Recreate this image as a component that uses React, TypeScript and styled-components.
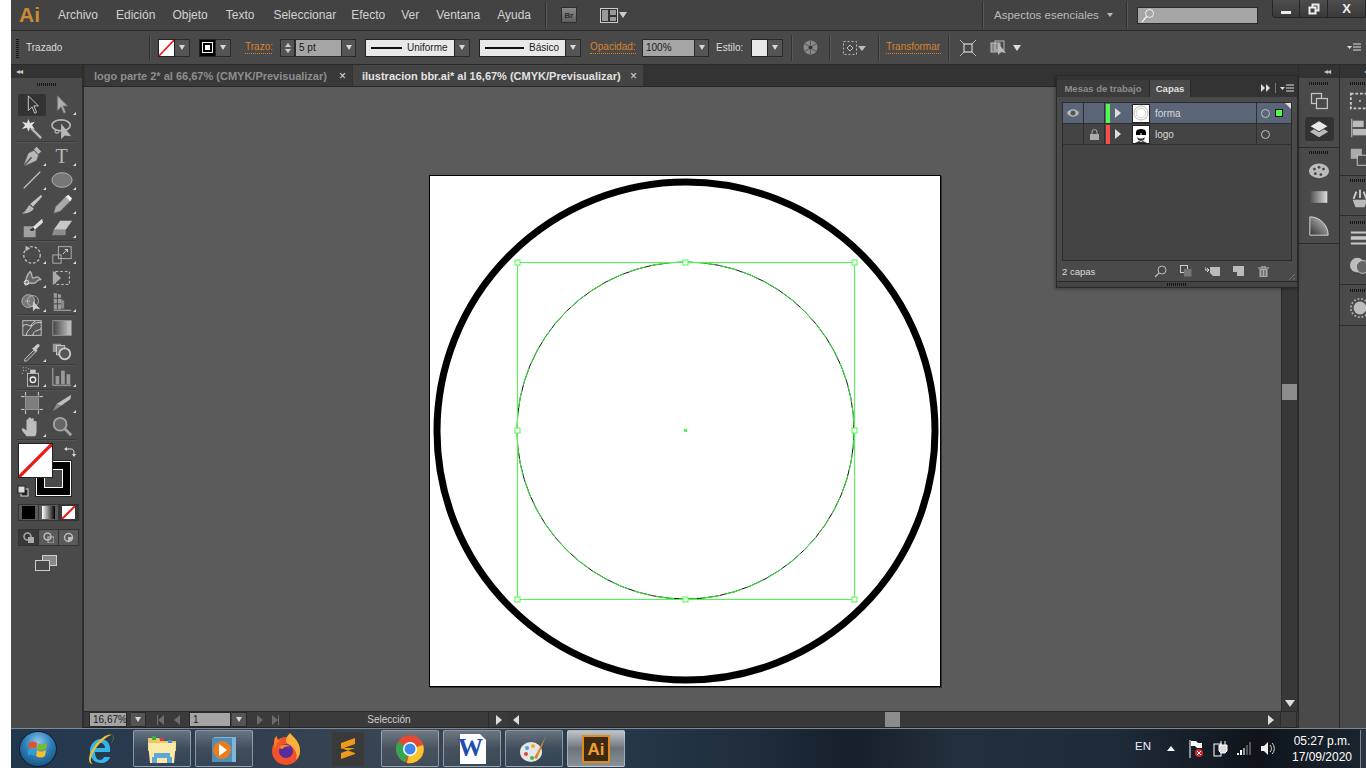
import React from "react";
import styled, { createGlobalStyle } from "styled-components";

const Global = createGlobalStyle`
  html, body { margin: 0; padding: 0; background: #fff; overflow: hidden; }
  * { box-sizing: border-box; }
  body { font-family: "Liberation Sans", Arial, sans-serif; }
`;

const Screen = styled.div`
  width: 1366px; height: 768px; padding-left: 11px; background: #fff;
  display: flex; flex-direction: column; overflow: hidden;
`;
const MenuBar = styled.div`
  height: 31px; flex: none; background: #434343; border-bottom: 1px solid #2a2a2a;
  display: flex; align-items: center; position: relative; color: #cfcfcf; font-size: 12px;
`;
const AiLogo = styled.span`
  margin-left: 8px; width: 22px; font-size: 21px; font-weight: 700; color: #c98a35; line-height: 30px;
`;
const MenuItem = styled.span<{ $ml: number }>`
  margin-left: ${(p) => p.$ml}px; white-space: nowrap; color: #d2d2d2;
`;
const VSep = styled.span<{ $ml: number; $h?: number; $c?: string }>`
  margin-left: ${(p) => p.$ml}px; width: 1px; height: ${(p) => p.$h ?? 26}px; background: ${(p) => p.$c ?? "#2f2f2f"};
  box-shadow: 1px 0 0 #585858; flex: none;
`;
const BrBadge = styled.span`
  margin-left: 15px; width: 16px; height: 16px; background: linear-gradient(#8a8a8a, #5e5e5e); border: 1px solid #2e2e2e;
  font-size: 8px; font-weight: 700; color: #2e2e2e; display: flex; align-items: center; justify-content: center; flex: none;
`;
const Slot = styled.span<{ $ml: number; $w: number; $h?: number }>`
  margin-left: ${(p) => p.$ml}px; width: ${(p) => p.$w}px; height: ${(p) => p.$h ?? 18}px; flex: none;
  display: flex; align-items: center; justify-content: center; position: relative;
`;
const WorkspaceLabel = styled.span`
  margin-left: 11px; width: 104px; color: #b9b9b9; font-size: 11.5px; white-space: nowrap; flex: none;
`;
const SearchBox = styled.span`
  margin-left: 10px; width: 121px; height: 17px; background: #a6a6a6; border: 1px solid #2b2b2b; display: flex; align-items: center; padding-left: 3px; flex: none;
`;
const WinButtons = styled.div`
  position: absolute; right: 0; top: 0; height: 18px; width: 94px; display: flex;
  background: linear-gradient(#4d4d4d, #3a3a3a); border: 1px solid #262626; border-top: 0; border-radius: 0 0 0 4px;
`;
const WinButton = styled.span<{ $w: number }>`
  width: ${(p) => p.$w}px; flex: none; display: flex; align-items: center; justify-content: center; border-right: 1px solid #262626; color: #eee; font-size: 13px; font-weight: 700;
  &:last-child { border-right: 0; }
`;

const OptionBar = styled.div`
  height: 34px; flex: none; background: #494949; border-bottom: 1px solid #2b2b2b;
  display: flex; align-items: center; font-size: 10px; color: #dcdcdc;
`;
const Grip = styled.span<{ $ml?: number; $w?: number; $h?: number; $v?: boolean }>`
  flex: none; margin-left: ${(p) => p.$ml ?? 0}px; width: ${(p) => p.$w ?? 20}px; height: ${(p) => p.$h ?? 3}px;
  background: repeating-linear-gradient(${(p) => (p.$v ? "0deg" : "90deg")}, #161616 0 1px, transparent 1px 2px);
`;
const Label = styled.span<{ $ml: number; $w: number; $orange?: boolean }>`
  flex: none; margin-left: ${(p) => p.$ml}px; width: ${(p) => p.$w}px; white-space: nowrap; line-height: 12px;
  color: ${(p) => (p.$orange ? "#d9822b" : "#dcdcdc")};
  border-bottom: ${(p) => (p.$orange ? "1px dotted #d9822b" : "0")};
`;
const Swatch = styled.span<{ $ml: number; $w?: number; $bg?: string }>`
  flex: none; margin-left: ${(p) => p.$ml}px; width: ${(p) => p.$w ?? 17}px; height: 18px;
  background: ${(p) => p.$bg ?? "#fff"}; border: 1px solid #222; display: flex; align-items: center; justify-content: center;
`;
const Drop = styled.span<{ $w?: number; $h?: number; $ml?: number }>`
  flex: none; margin-left: ${(p) => p.$ml ?? 0}px; width: ${(p) => p.$w ?? 15}px; height: ${(p) => p.$h ?? 18}px; background: #555; border: 1px solid #2a2a2a; border-left: 0;
  display: flex; align-items: center; justify-content: center;
  &::after { content: ""; border: 3.5px solid transparent; border-top: 5px solid #d8d8d8; border-bottom: 0; }
`;
const Spinner = styled.span<{ $ml: number }>`
  flex: none; margin-left: ${(p) => p.$ml}px; width: 15px; height: 18px; background: #555; border: 1px solid #2a2a2a;
  display: flex; flex-direction: column; align-items: center; justify-content: space-around; padding: 2px 0;
  &::before { content: ""; border: 3px solid transparent; border-bottom: 4px solid #cfcfcf; border-top: 0; }
  &::after { content: ""; border: 3px solid transparent; border-top: 4px solid #cfcfcf; border-bottom: 0; }
`;
const Field = styled.span<{ $ml?: number; $w: number; $h?: number }>`
  flex: none; margin-left: ${(p) => p.$ml ?? 0}px; width: ${(p) => p.$w}px; height: ${(p) => p.$h ?? 18}px;
  background: #a5a5a5; border: 1px solid #2a2a2a; color: #1a1a1a; font-size: 10px; display: flex; align-items: center; padding-left: 3px; white-space: nowrap;
`;
const StrokeBox = styled.span<{ $ml: number; $w: number; $line: number }>`
  flex: none; margin-left: ${(p) => p.$ml}px; width: ${(p) => p.$w}px; height: 18px; background: #e8e8e8; border: 1px solid #222;
  display: flex; align-items: center; color: #1e1e1e; font-size: 10px; padding-left: 5px; gap: 5px; white-space: nowrap;
  &::before { content: ""; width: ${(p) => p.$line}px; height: 2px; background: #111; flex: none; }
`;

const Body = styled.div`
  flex: 1; min-height: 0; display: flex;
`;
const ToolBar = styled.div`
  width: 73px; flex: none; background: #4a4a4a; border-right: 2px solid #2d2d2d; display: flex; flex-direction: column;
`;
const CollapseStrip = styled.div`
  height: 13px; flex: none; background: #333; display: flex; align-items: center; padding-left: 5px; color: #c8c8c8; font-size: 8px; letter-spacing: -1px;
`;
const GripRow = styled.div<{ $h?: number }>`
  height: ${(p) => p.$h ?? 12}px; flex: none; display: flex; align-items: center; justify-content: center;
`;
const ToolGroup = styled.div<{ $pt?: number }>`
  display: grid; grid-template-columns: 30px 30px; justify-content: center; flex: none;
  grid-auto-rows: 24px; padding: ${(p) => p.$pt ?? 1}px 0 0; border-bottom: 1px solid #3b3b3b; box-shadow: 0 1px 0 #555; margin: 0 6px;
`;
const Tool = styled.div<{ $active?: boolean; $more?: boolean }>`
  display: flex; align-items: center; justify-content: center; position: relative; border-radius: 2px;
  margin: ${(p) => (p.$active ? "1px" : "0")};
  background: ${(p) => (p.$active ? "#333" : "transparent")};
  font-family: "Liberation Serif", serif; font-size: 20px; color: #b8b8b8; line-height: 1;
  &::after {
    content: ""; position: absolute; right: 1px; bottom: 2px; display: ${(p) => (p.$more ? "block" : "none")};
    border-left: 3px solid transparent; border-bottom: 3px solid #ddd;
  }
`;
const ColorArea = styled.div`
  height: 56px; margin: 3px 0 0 6px; position: relative; flex: none;
`;
const FillBox = styled.div`
  position: absolute; left: 1px; top: 0; width: 35px; height: 35px; background: #fff; border: 1px solid #222; z-index: 2; overflow: hidden;
`;
const StrokeSquare = styled.div`
  position: absolute; left: 19px; top: 18px; width: 35px; height: 35px; background: #000; border: 1px solid #fff; outline: 1px solid #222; z-index: 1;
  display: flex; align-items: center; justify-content: center;
  &::after { content: ""; width: 17px; height: 17px; background: #4a4a4a; border: 1px solid #fff; }
`;
const MiniSwap = styled.span`
  position: absolute; left: 47px; top: 1px; z-index: 3;
`;
const MiniDefault = styled.span`
  position: absolute; left: 0; top: 40px; z-index: 3;
`;
const ButtonRow = styled.div<{ $mt: number }>`
  margin: ${(p) => p.$mt}px 0 0 7px; width: 61px; height: 17px; display: flex; flex: none; background: #383838; border: 1px solid #333;
`;
const ModeButton = styled.span<{ $active?: boolean }>`
  flex: 1; display: flex; align-items: center; justify-content: center; border-right: 1px solid #333;
  background: ${(p) => (p.$active ? "#383838" : "#5a5a5a")};
  &:last-child { border-right: 0; }
`;
const ScreenMode = styled.div`
  margin-top: 9px; display: flex; justify-content: center; padding-right: 1px;
`;

const Center = styled.div`
  flex: none; width: 1214px; display: flex; flex-direction: column; position: relative;
`;
const TabBar = styled.div`
  height: 22px; flex: none; background: #333; display: flex; border-bottom: 1px solid #262626;
`;
const Tab = styled.div<{ $active?: boolean; $w: number }>`
  width: ${(p) => p.$w}px; flex: none; margin-left: 1px; padding-left: 9px; display: flex; align-items: center; position: relative;
  background: ${(p) => (p.$active ? "#444" : "#393939")}; color: ${(p) => (p.$active ? "#e2e2e2" : "#8e8e8e")};
  font-size: 11px; font-weight: 700; white-space: nowrap;
`;
const TabClose = styled.span`
  position: absolute; right: 6px; top: 4px; font-size: 12px; font-weight: 400; color: #ddd;
`;
const CanvasRow = styled.div`
  flex: 1; min-height: 0; display: flex; border-bottom: 1px solid #2a2a2a;
`;
const Canvas = styled.div`
  flex: 1; background: #5b5b5b; padding: 88px 0 0 345px; min-width: 0;
`;
const Artboard = styled.div`
  width: 512px; height: 512px; background: #fff; border: 1px solid #000; box-shadow: 1px 1px 0 #333;
`;
const VScroll = styled.div`
  width: 17px; flex: none; background: #383838; border-left: 1px solid #2b2b2b; border-right: 1px solid #2b2b2b;
  display: flex; flex-direction: column; align-items: center;
`;
const VThumb = styled.div`
  width: 15px; height: 16px; background: #8c8c8c; margin-top: 297px; flex: none;
`;
const VArrow = styled.div`
  margin-top: auto; margin-bottom: 4px; border: 5px solid transparent; border-top: 7px solid #ddd; border-bottom: 0;
`;
const StatusBar = styled.div`
  height: 16px; flex: none; background: #3b3b3b; display: flex; align-items: center; border-bottom: 1px solid #262626; font-size: 10px; color: #d5d5d5;
`;
const StatusCell = styled.span`
  margin-left: 10px; width: 200px; height: 15px; flex: none; color: #d0d0d0; white-space: nowrap; text-align: center; line-height: 15px;
  border-left: 1px solid #2b2b2b; border-right: 1px solid #2b2b2b;
`;
const HScroll = styled.div`
  flex: none; margin-left: 6px; width: 772px; height: 15px; background: #383838; display: flex; align-items: center; position: relative;
`;
const HThumb = styled.span`
  position: absolute; left: 377px; top: 0; width: 15px; height: 15px; background: #8c8c8c;
`;
const Corner = styled.span`
  width: 17px; height: 15px; flex: none; background: #3f3f3f; border-left: 1px solid #2b2b2b; border-right: 1px solid #2b2b2b;
`;
const Tri = styled.span<{ $dir: "l" | "r"; $ml?: number; $c?: string }>`
  flex: none; margin-left: ${(p) => p.$ml ?? 0}px; width: 0; height: 0; border-top: 5px solid transparent; border-bottom: 5px solid transparent;
  ${(p) => (p.$dir === "l" ? `border-right: 6px solid ${p.$c ?? "#ddd"};` : `border-left: 6px solid ${p.$c ?? "#ddd"};`)}
`;
const Bar = styled.span<{ $ml?: number; $c?: string }>`
  flex: none; margin-left: ${(p) => p.$ml ?? 0}px; width: 1px; height: 10px; background: ${(p) => p.$c ?? "#6c6c6c"};
`;

const Panel = styled.div`
  position: absolute; left: 972px; top: 10px; width: 242px; height: 213px; background: #4a4a4a;
  border: 1px solid #2a2a2a; display: flex; flex-direction: column; box-shadow: -1px 1px 3px rgba(0,0,0,.35); z-index: 5;
`;
const PanelHead = styled.div`
  height: 21px; flex: none; background: #333; display: flex; align-items: flex-end; position: relative; font-size: 9.5px; font-weight: 700;
`;
const PanelTab = styled.span<{ $active?: boolean; $w: number }>`
  width: ${(p) => p.$w}px; height: 17px; display: flex; align-items: center; justify-content: center; flex: none; white-space: nowrap;
  background: ${(p) => (p.$active ? "#4a4a4a" : "#3b3b3b")}; color: ${(p) => (p.$active ? "#e0e0e0" : "#8d8d8d")}; border-right: 1px solid #2a2a2a;
`;
const PanelHeadIcons = styled.span`
  position: absolute; right: 3px; top: 7px; display: flex; align-items: center; gap: 4px;
`;
const LayerList = styled.div`
  margin: 5px 5px 0; height: 159px; flex: none; background: #444; border: 1px solid #2b2b2b; display: flex; flex-direction: column;
`;
const LayerRow = styled.div<{ $sel?: boolean }>`
  height: 21px; flex: none; display: flex; align-items: center; position: relative; border-bottom: 1px solid #2f2f2f;
  background: ${(p) => (p.$sel ? "#5a6577" : "transparent")};
  &::after {
    content: ""; position: absolute; right: 0; top: 0; display: ${(p) => (p.$sel ? "block" : "none")};
    border-left: 6px solid transparent; border-top: 6px solid #ddd;
  }
`;
const LayerCell = styled.span<{ $w: number }>`
  width: ${(p) => p.$w}px; height: 100%; flex: none; display: flex; align-items: center; justify-content: center; border-right: 1px solid #2f2f2f;
`;
const ColorTag = styled.span<{ $c: string }>`
  width: 4px; height: 19px; margin-left: 1px; background: ${(p) => p.$c}; flex: none;
`;
const Thumb = styled.span`
  margin-left: 10px; width: 18px; height: 19px; background: #fff; border: 1px solid #222; display: flex; align-items: center; justify-content: center; flex: none;
`;
const LayerName = styled.span`
  margin-left: 5px; width: 102px; height: 100%; flex: none; font-size: 10px; color: #d8d8d8; display: flex; align-items: center; border-right: 1px solid #2f2f2f;
`;
const TargetRing = styled.span`
  margin-left: 4px; width: 9px; height: 9px; border-radius: 50%; border: 1px solid #c0c0c0; flex: none;
`;
const SelSquare = styled.span`
  margin-left: 6px; width: 6px; height: 6px; background: #4dfc4d; outline: 1px solid #111; flex: none;
`;
const PanelFooter = styled.div`
  height: 20px; flex: none; display: flex; align-items: center; padding-left: 5px; font-size: 9.5px; color: #dcdcdc; position: relative;
`;
const FooterText = styled.span`
  width: 92px; flex: none;
`;
const ResizeGrip = styled.span`
  position: absolute; right: 2px; bottom: 1px; width: 9px; height: 9px;
  background: repeating-linear-gradient(135deg, transparent 0 2px, #777 2px 3px);
  clip-path: polygon(100% 0, 100% 100%, 0 100%);
`;
const PanelBottom = styled.div`
  flex: 1; background: #434343; border-top: 1px solid #2a2a2a; display: flex; align-items: center; justify-content: center;
`;

const Docks = styled.div`
  flex: 1; min-width: 0; display: flex; background: #4a4a4a; overflow: hidden;
`;
const DockCol = styled.div`
  width: 41px; flex: none; display: flex; flex-direction: column; border-left: 1px solid #2a2a2a;
`;
const DockHead = styled.div<{ $pl: number }>`
  height: 13px; flex: none; background: #333; color: #c8c8c8; font-size: 8px; letter-spacing: -1px; display: flex; align-items: center; padding-left: ${(p) => p.$pl}px;
`;
const DockGroup = styled.div<{ $h: number }>`
  height: ${(p) => p.$h}px; flex: none; border-bottom: 1px solid #2d2d2d; display: flex; flex-direction: column; align-items: center;
`;
const DockIcon = styled.span<{ $h?: number; $active?: boolean; $mt?: number }>`
  height: ${(p) => p.$h ?? 28}px; width: 29px; flex: none; display: flex; align-items: center; justify-content: center; border-radius: 3px;
  margin-top: ${(p) => p.$mt ?? 0}px;
  background: ${(p) => (p.$active ? "#333" : "transparent")};
`;

const Taskbar = styled.div`
  height: 40px; flex: none; display: flex; align-items: center; border-top: 1px solid #7a8a99; color: #fff; font-size: 12px;
  background: linear-gradient(90deg, #22364c 0, #2f3e50 15%, #3a4652 30%, #26384a 45%, #1f2c3b 55%, #16202b 62%, #232f3c 70%, #1e2a38 82%, #0f141a 92%, #1a2530 100%);
`;
const Orb = styled.span`
  margin-left: 8px; width: 38px; height: 36px; border-radius: 50%; flex: none; position: relative; display: flex; align-items: center; justify-content: center;
  background: radial-gradient(circle at 50% 30%, #8ec6ea 0, #2d7fb8 45%, #123f69 100%); border: 1px solid #0d2338;
`;
const TaskTile = styled.span<{ $ml: number; $active?: boolean }>`
  margin-left: ${(p) => p.$ml}px; width: 58px; height: 37px; flex: none; display: flex; align-items: center; justify-content: center; border-radius: 2px;
  background: ${(p) => p.$active ? "linear-gradient(#bfc4c9, #6d737a 50%, #8a9097)" : "linear-gradient(rgba(255,255,255,.28), rgba(255,255,255,.08) 50%, rgba(255,255,255,.04))"};
  border: 1px solid rgba(200,210,220,.55);
`;
const TrayText = styled.span<{ $ml: number }>`
  margin-left: ${(p) => p.$ml}px; margin-bottom: 6px; font-size: 11.5px; flex: none; color: #eef;
`;
const Clock = styled.span`
  margin-left: 15px; width: 64px; flex: none; text-align: center; font-size: 12px; line-height: 16px; color: #fff; white-space: nowrap;
`;
const ShowDesktop = styled.span`
  margin-left: 6px; width: 7px; height: 38px; flex: none; border-left: 1px solid #7a8a99; background: rgba(255,255,255,.08);
`;

const C = "#b8b8b8";
const I = ({ children, s = 22, v = 24 }: { children: React.ReactNode; s?: number; v?: number }) => (
  <svg width={s} height={s} viewBox={`0 0 ${v} ${v}`} fill="none">{children}</svg>
);

const tools: Record<string, React.ReactNode> = {
  select: <path d="M8 2v16l4-4 3 7 2-1-3-7h5z" fill="#333" stroke="#d0d0d0" />,
  direct: <path d="M7 2v16l4-4 3 7 2-1-3-7h5z" fill="#b0b0b0" stroke="#777" />,
  wand: <><path d="M11 11l11 11" stroke={C} strokeWidth="2.500" /><path d="M8 1l1.8 4.500L15 4l-3 4 3 4-5.200-1.500L8 15l-1.500-4.500L1 12l3.500-4L1 4l5.500 1.500z" fill="#e2e2e2" /></>,
  lasso: <><ellipse cx="11" cy="8" rx="10" ry="6" stroke={C} strokeWidth="1.800" /><path d="M5 13c-2 3 2 5 4 2" stroke={C} strokeWidth="1.300" /><path d="M11 6v17l4-4 7 1z" fill={C} /></>,
  pen: <><path d="M17 2l5 5-3 3-5-5z" fill={C} /><path d="M14 6l5 5-2 6-13 6 8-9-1-1-8 9 5-13z" fill={C} stroke="#666" strokeWidth=".5" /></>,
  line: <path d="M3 21L21 3" stroke="#c8c8c8" strokeWidth="1.200" />,
  ellipse: <ellipse cx="12" cy="12" rx="11" ry="8" fill="#777" stroke="#b5b5b5" />,
  brush: <><path d="M22 2l1 2-10 11-3-3z" fill="#c4c4c4" /><path d="M9 13l5 4c-2 4-8 6-13 5 3-1 5-4 8-9z" fill={C} /></>,
  pencil: <><path d="M17 3l5 5-12 12-7 2 2-7z" fill="#aaa" stroke="#666" strokeWidth=".5" /><path d="M16 4l5 5 2-3-4-4z" fill="#eee" /></>,
  blob: <><path d="M3 10h11l2 4v8H3z" fill="#a0a0a0" /><path d="M23 2l-10 9 2 3 9-8z" fill="#ddd" /><path d="M9 14c3-1 4-2 4-3l2 3c-1 1-4 2-6 0z" fill="#333" /></>,
  eraser: <><path d="M10 4h13l-7 10H3z" fill="#c8c8c8" /><path d="M3 14h13v6H1z" fill="#8c8c8c" /></>,
  rotate: <><circle cx="12" cy="13" r="9" stroke="#bbb" strokeWidth="1.500" strokeDasharray="3 2" /><path d="M5 9V3l5 3z" fill="#bbb" /></>,
  scale: <><rect x="2" y="13" width="9" height="9" stroke="#b5b5b5" /><rect x="8" y="4" width="14" height="13" stroke="#b5b5b5" /><path d="M13 12l5-5m-3 0h3v3" stroke="#ddd" /></>,
  warp: <><path d="M5 19c0-7 3-12 5-14 3 3 1 8 4 7 3 0 2-4 8 2-3-1-4 1-6 3-3 2-8-1-11 2z" stroke="#b5b5b5" strokeWidth="1.500" fill="#666" /><circle cx="6" cy="17" r="2.500" stroke="#eee" /></>,
  free: <><rect x="5" y="5" width="15" height="14" stroke="#ccc" strokeDasharray="3 2" /><path d="M2 4l9 8-9 8z" fill="#aaa" /></>,
  shape: <><circle cx="8" cy="11" r="7" fill="#777" stroke="#b5b5b5" /><circle cx="13" cy="11" r="6" stroke="#b5b5b5" /><path d="M5 11h6" stroke="#eee" strokeDasharray="1 1" /><path d="M13 11v11l3-3 5 1z" fill="#ccc" /></>,
  persp: <><path d="M3 2l8 2v16H3z" fill="#9a9a9a" /><path d="M11 9l4 2v8h-4z" fill="#8a8a8a" /><path d="M3 8h8M3 14h8M7 3v17M15 11v8h7" stroke="#444" /><path d="M3 21h19" stroke="#bbb" /></>,
  mesh: <><rect x="2" y="4" width="20" height="16" fill="#555" stroke="#c8c8c8" /><path d="M2 10c5-5 8 3 12-2 2-2 5-2 8-2M6 20c0-6 5-6 5-10s4-3 4-6M13 20c0-5 5-5 9-7" stroke="#ddd" /></>,
  gradient: <><defs><linearGradient id="gr1"><stop offset="0" stopColor="#444" /><stop offset="1" stopColor="#ccc" /></linearGradient></defs><rect x="2" y="4" width="20" height="16" fill="url(#gr1)" stroke="#999" /></>,
  dropper: <><path d="M4 20l10-10 2 2-10 10H4z" fill="#555" stroke="#ccc" /><path d="M14 7l3-3c2-2 4 0 3 2l-3 3 1 2-2 1-4-4z" fill="#ccc" /></>,
  blend: <><rect x="2" y="3" width="9" height="9" fill="#999" /><rect x="6" y="5" width="9" height="10" fill="#777" stroke="#ccc" /><circle cx="15" cy="14" r="6" fill="#555" stroke="#ccc" strokeWidth="2" /></>,
  spray: <><rect x="7" y="8" width="12" height="14" fill="#444" stroke="#c5c5c5" /><circle cx="13" cy="15" r="3" stroke="#eee" strokeWidth="1.500" /><rect x="10" y="4" width="6" height="4" fill="#c5c5c5" /><path d="M2 2h1M5 2h1M2 5h1M5 5h1M8 3h1M1 8h1" stroke="#ddd" /></>,
  chart: <><path d="M2 2v19h20" stroke="#bbb" /><rect x="5" y="11" width="4" height="9" fill="#999" /><rect x="11" y="5" width="4" height="15" fill="#999" /><rect x="17" y="9" width="4" height="11" fill="#999" /></>,
  artboard: <><rect x="5" y="5" width="14" height="14" fill="#7d7d7d" stroke="#999" /><path d="M5 0v4M19 0v4M5 20v4M19 20v4M0 5h4M0 19h4M20 5h4M20 19h4" stroke="#ddd" /></>,
  slice: <><path d="M22 3L6 13l5 2 10-7z" fill="#c0c0c0" /><path d="M6 13l-4 8 9-6z" fill="#8c8c8c" /></>,
  hand: <path d="M6 22c-2-3-6-6-5-8s4 1 5 2V5c0-2 2-2 2 0v5V3c0-2 3-2 3 0v7-6c0-2 3-2 3 0v7-4c0-2 3-2 3 0v9c0 3-1 6-2 6z" fill="#bdbdbd" />,
  zoom: <><circle cx="10" cy="9" r="7" fill="#666" stroke="#a5a5a5" strokeWidth="2" /><path d="M15 14l7 7" stroke="#a5a5a5" strokeWidth="3" /></>,
};

const T = ({ n, more, active }: { n: string; more?: boolean; active?: boolean }) => (
  <Tool $more={more} $active={active}><I>{tools[n]}</I></Tool>
);

const RedSlash = () => (
  <svg width="100%" height="100%" viewBox="0 0 16 16" preserveAspectRatio="none"><path d="M0 16L16 0" stroke="#f01818" strokeWidth="1.600" /></svg>
);

const hx = [87.5, 255.5, 424.5];
const hy = [86.5, 254.5, 423.5];
const handles = hx.flatMap((x, i) => hy.map((y, j) => [x, y, i, j])).filter(([, , i, j]) => !(i === 1 && j === 1));

const Drawing = () => (
  <svg width="510" height="510" viewBox="0 0 510 510" style={{ display: "block" }}>
    <circle cx="256" cy="255" r="249" fill="none" stroke="#000" strokeWidth="7" />
    <circle cx="255.500" cy="254.500" r="168.500" fill="none" stroke="#111" strokeWidth="1" />
    <circle cx="255.500" cy="254.500" r="168.500" fill="none" stroke="#36f036" strokeWidth="1" strokeDasharray="18 5" />
    <rect x="87.500" y="86.500" width="337" height="337" fill="none" stroke="#4cf94c" strokeWidth="1" />
    {handles.map(([x, y]) => <rect key={`${x}-${y}`} x={x - 2.500} y={y - 2.500} width="5" height="5" fill="#fff" stroke="#4cf94c" />)}
    <rect x="254" y="253" width="3" height="3" fill="#4cf94c" />
  </svg>
);

const dockIcons = {
  artboards: <I s={20}><rect x="3" y="3" width="12" height="12" stroke="#c5c5c5" strokeWidth="1.500" /><rect x="9" y="9" width="13" height="12" fill="#4a4a4a" stroke="#c5c5c5" strokeWidth="1.500" /></I>,
  layers: <I s={22}><path d="M12 9l10 6-10 6-10-6z" fill="#bbb" /><path d="M12 3l10 6-10 6-10-6z" fill="#e8e8e8" stroke="#333" /></I>,
  palette: <I s={22}><ellipse cx="12" cy="13" rx="11" ry="8" fill="#bbb" /><circle cx="7" cy="11" r="1.500" fill="#444" /><circle cx="12" cy="9" r="1.500" fill="#444" /><circle cx="17" cy="11" r="1.500" fill="#444" /><circle cx="8" cy="16" r="1.500" fill="#444" /><circle cx="14" cy="17" r="1.500" fill="#444" /></I>,
  grad: <I s={20}><defs><linearGradient id="gr2"><stop offset="0" stopColor="#555" /><stop offset="1" stopColor="#ddd" /></linearGradient></defs><rect x="2" y="5" width="20" height="14" fill="url(#gr2)" /></I>,
  transp: <I s={22}><defs><linearGradient id="gr3" x1="0" x2="1" y1="1" y2="0"><stop offset="0" stopColor="#333" /><stop offset="1" stopColor="#ccc" /></linearGradient></defs><path d="M2 2c11 0 20 9 20 20H2z" fill="url(#gr3)" stroke="#ddd" /></I>,
  transform: <I s={22}><rect x="2" y="4" width="20" height="16" stroke="#ccc" strokeWidth="2" strokeDasharray="3 2" /><circle cx="12" cy="12" r="1" fill="#ccc" /></I>,
  align: <I s={22}><path d="M3 2v20" stroke="#ccc" /><rect x="4" y="4" width="12" height="7" fill="#bbb" /><rect x="4" y="13" width="18" height="7" fill="#bbb" /></I>,
  pathf: <I s={22}><rect x="2" y="3" width="12" height="11" fill="#aaa" /><rect x="9" y="10" width="13" height="11" fill="#4a4a4a" stroke="#ccc" /></I>,
  brushes: <I s={22}><path d="M12 12V3M5 13l3-8M19 13l-3-8" stroke="#ccc" strokeWidth="2" /><path d="M4 14h16l-3 8H7z" fill="#bbb" /></I>,
  lines: <I s={22}><path d="M2 5h20v2H2zM2 10h20v4H2zM2 17h20v2H2z" fill="#c8c8c8" /></I>,
  appear: <I s={22}><circle cx="9" cy="11" r="8" fill="#bdbdbd" /><circle cx="15" cy="13" r="7" fill="#666" stroke="#ccc" /></I>,
  sym: <I s={22}><circle cx="12" cy="12" r="10" stroke="#aaa" strokeWidth="2" strokeDasharray="2 2" /><circle cx="12" cy="12" r="7" fill="#bdbdbd" /></I>,
};

const MenuLines = () => (
  <svg width="14" height="9" viewBox="0 0 14 9"><path d="M0 3h5L2.500 6z" fill="#ddd" /><path d="M6 1h8M6 4h8M6 7h8" stroke="#ddd" /></svg>
);

export default function App() {
  return (
    <Screen>
      <Global />
      <MenuBar>
        <AiLogo>Ai</AiLogo>
        <MenuItem $ml={17}>Archivo</MenuItem>
        <MenuItem $ml={18}>Edición</MenuItem>
        <MenuItem $ml={17}>Objeto</MenuItem>
        <MenuItem $ml={18}>Texto</MenuItem>
        <MenuItem $ml={19}>Seleccionar</MenuItem>
        <MenuItem $ml={15}>Efecto</MenuItem>
        <MenuItem $ml={16}>Ver</MenuItem>
        <MenuItem $ml={17}>Ventana</MenuItem>
        <MenuItem $ml={17}>Ayuda</MenuItem>
        <VSep $ml={14} />
        <BrBadge>Br</BrBadge>
        <Slot $ml={23} $w={18} $h={15}><svg width="18" height="15" viewBox="0 0 18 15" fill="none"><rect x=".5" y=".5" width="17" height="14" fill="#333" stroke="#ccc" /><path d="M2 2h6v11H2zM10 2h6v5h-6zM10 9h6v4h-6z" fill="#999" /></svg></Slot>
        <Slot $ml={1} $w={8}><svg width="8" height="6"><path d="M0 0h8L4 6z" fill="#ccc" /></svg></Slot>
        <VSep $ml={355} />
        <WorkspaceLabel>Aspectos esenciales</WorkspaceLabel>
        <Slot $ml={9} $w={6}><svg width="6" height="4"><path d="M0 0h6L3 4z" fill="#bbb" /></svg></Slot>
        <VSep $ml={13} />
        <SearchBox><svg width="14" height="15" viewBox="0 0 14 15" fill="none"><circle cx="8.500" cy="5.500" r="4" stroke="#eee" /><path d="M5.500 8.500L1 14" stroke="#eee" strokeWidth="1.300" /></svg></SearchBox>
        <WinButtons>
          <WinButton $w={27}><svg width="12" height="10"><rect x="1" y="7" width="10" height="3" fill="#eee" /></svg></WinButton>
          <WinButton $w={28}><svg width="12" height="12" fill="none"><rect x="4.500" y="1.500" width="6" height="6" stroke="#eee" strokeWidth="2" /><rect x="1.500" y="4.500" width="6" height="6" fill="#444" stroke="#eee" strokeWidth="2" /></svg></WinButton>
          <WinButton $w={37}>X</WinButton>
        </WinButtons>
      </MenuBar>
      <OptionBar>
        <Grip $ml={5} $w={3} $h={20} $v />
        <Label $ml={7} $w={36}>Trazado</Label>
        <VSep $ml={87} $h={26} />
        <Swatch $ml={8}><RedSlash /></Swatch><Drop />
        <Swatch $ml={9} $bg="#000"><svg width="11" height="11" fill="none"><rect x=".5" y=".5" width="10" height="10" stroke="#fff" /><rect x="3" y="3" width="5" height="5" fill="#fff" /></svg></Swatch><Drop />
        <Label $ml={14} $w={27} $orange>Trazo:</Label>
        <Spinner $ml={8} /><Field $w={47}>5 pt</Field><Drop $w={14} />
        <StrokeBox $ml={9} $w={90} $line={31}>Uniforme</StrokeBox><Drop />
        <StrokeBox $ml={9} $w={87} $line={39}>Básico</StrokeBox><Drop />
        <Label $ml={9} $w={46} $orange>Opacidad:</Label>
        <Field $ml={6} $w={53}>100%</Field><Drop $w={14} />
        <Label $ml={7} $w={26}>Estilo:</Label>
        <Swatch $ml={9} $bg="#e8e8e8" /><Drop />
        <VSep $ml={8} $h={26} $c="#333" />
        <Slot $ml={11} $w={15}><svg width="15" height="15" viewBox="0 0 15 15"><circle cx="7.500" cy="7.500" r="7" fill="#8a8a8a" /><circle cx="7.500" cy="7.500" r="2" fill="#333" /><path d="M7.500 1v4M2 4l4 2M2 11l4-2M13 4L9 6M13 11L9 9M7.500 14v-4" stroke="#555" /></svg></Slot>
        <VSep $ml={11} $c="#333" />
        <Slot $ml={12} $w={24}><svg width="24" height="16" viewBox="0 0 24 16" fill="none"><rect x="1.500" y="1.500" width="13" height="13" stroke="#bbb" strokeDasharray="2 2" /><path d="M8 5l3 3-3 3-3-3z" stroke="#bbb" /><path d="M16 6h8l-4 5z" fill="#bbb" /></svg></Slot>
        <VSep $ml={12} $c="#333" />
        <Label $ml={7} $w={55} $orange>Transformar</Label>
        <VSep $ml={7} $c="#333" />
        <Slot $ml={11} $w={16}><svg width="16" height="16" viewBox="0 0 16 16" fill="none"><rect x="4" y="4" width="8" height="8" stroke="#bbb" strokeWidth="1.500" /><path d="M0 0l4 4M16 0l-4 4M0 16l4-4M16 16l-4-4" stroke="#bbb" /></svg></Slot>
        <Slot $ml={14} $w={18}><svg width="18" height="16" viewBox="0 0 18 16" fill="none"><rect x="1" y="3" width="9" height="9" fill="#888" stroke="#bbb" /><rect x="5" y="1" width="9" height="9" stroke="#bbb" /><path d="M8 3v12l3-3 5 1z" fill="#bbb" /></svg></Slot>
        <Slot $ml={5} $w={8}><svg width="8" height="6"><path d="M0 0h8L4 6z" fill="#ddd" /></svg></Slot>
        <Slot $ml={326} $w={14}><MenuLines /></Slot>
      </OptionBar>
      <Body>
        <ToolBar>
          <CollapseStrip>◂◂</CollapseStrip>
          <GripRow><Grip $w={20} $h={3} /></GripRow>
          <ToolGroup $pt={3}>
            <T n="select" active /><T n="direct" more />
            <T n="wand" /><T n="lasso" />
          </ToolGroup>
          <ToolGroup $pt={2}>
            <T n="pen" more /><Tool $more>T</Tool>
            <T n="line" more /><T n="ellipse" more />
            <T n="brush" /><T n="pencil" more />
            <T n="blob" /><T n="eraser" more />
          </ToolGroup>
          <ToolGroup>
            <T n="rotate" more /><T n="scale" more />
            <T n="warp" more /><T n="free" />
            <T n="shape" more /><T n="persp" more />
          </ToolGroup>
          <ToolGroup>
            <T n="mesh" /><T n="gradient" />
            <T n="dropper" more /><T n="blend" />
          </ToolGroup>
          <ToolGroup $pt={0}>
            <T n="spray" more /><T n="chart" more />
          </ToolGroup>
          <ToolGroup>
            <T n="artboard" /><T n="slice" more />
            <T n="hand" more /><T n="zoom" />
          </ToolGroup>
          <ColorArea>
            <FillBox><RedSlash /></FillBox>
            <StrokeSquare />
            <MiniSwap><svg width="12" height="12" viewBox="0 0 12 12" fill="none"><path d="M2 3h5c2 0 3 1 3 5" stroke="#ddd" /><path d="M0 3l3-2v4zM10 11l-2-3h4z" fill="#ddd" /></svg></MiniSwap>
            <MiniDefault><svg width="12" height="12" viewBox="0 0 12 12"><rect x="4" y="4" width="7" height="7" fill="#222" stroke="#ddd" /><rect x="1" y="1" width="7" height="7" fill="#ddd" stroke="#222" /></svg></MiniDefault>
          </ColorArea>
          <ButtonRow $mt={5}>
            <ModeButton><svg width="13" height="13"><rect width="13" height="13" fill="#000" /></svg></ModeButton>
            <ModeButton><svg width="13" height="13"><defs><linearGradient id="gr4"><stop offset="0" stopColor="#fff" /><stop offset="1" stopColor="#000" /></linearGradient></defs><rect width="13" height="13" fill="url(#gr4)" /></svg></ModeButton>
            <ModeButton $active><svg width="13" height="13"><rect width="13" height="13" fill="#fff" /><path d="M0 13L13 0" stroke="#f01818" strokeWidth="2" /></svg></ModeButton>
          </ButtonRow>
          <ButtonRow $mt={8}>
            <ModeButton $active><svg width="11" height="11" fill="none"><circle cx="4.500" cy="4.500" r="3.500" stroke="#aaa" strokeWidth="1.500" /><rect x="5" y="5" width="6" height="6" fill="#aaa" /></svg></ModeButton>
            <ModeButton><svg width="11" height="11" fill="none"><circle cx="4.500" cy="4.500" r="3.500" stroke="#bbb" strokeWidth="1.500" /><rect x="5" y="5" width="6" height="6" stroke="#bbb" /></svg></ModeButton>
            <ModeButton><svg width="11" height="11" fill="none"><circle cx="5.500" cy="5.500" r="4" stroke="#bbb" strokeWidth="1.500" /><rect x="5" y="5" width="4" height="4" fill="#bbb" /></svg></ModeButton>
          </ButtonRow>
          <ScreenMode><svg width="22" height="16" viewBox="0 0 22 16" fill="none"><rect x="7.500" y=".5" width="14" height="10" fill="#888" stroke="#ccc" /><rect x=".5" y="5.500" width="14" height="10" fill="#4a4a4a" stroke="#ccc" /></svg></ScreenMode>
        </ToolBar>
        <Center>
          <TabBar>
            <Tab $w={267}>logo parte 2* al 66,67% (CMYK/Previsualizar)<TabClose>×</TabClose></Tab>
            <Tab $w={290} $active>ilustracion bbr.ai* al 16,67% (CMYK/Previsualizar)<TabClose>×</TabClose></Tab>
          </TabBar>
          <CanvasRow>
            <Canvas>
              <Artboard><Drawing /></Artboard>
            </Canvas>
            <VScroll>
              <VThumb />
              <VArrow />
            </VScroll>
          </CanvasRow>
          <StatusBar>
            <Field $ml={5} $w={38} $h={15}>16,67%</Field><Drop $ml={4} $w={15} $h={15} />
            <Bar $ml={11} /><Tri $dir="l" $c="#6c6c6c" /><Tri $dir="l" $ml={10} $c="#6c6c6c" />
            <Field $ml={9} $w={42} $h={15}>1</Field><Drop $ml={1} $w={15} $h={15} />
            <Tri $dir="r" $ml={10} $c="#6c6c6c" /><Tri $dir="r" $ml={9} $c="#6c6c6c" /><Bar $c="#6c6c6c" />
            <StatusCell>Selección</StatusCell>
            <Tri $dir="r" $ml={7} />
            <HScroll>
              <Tri $dir="l" $ml={5} />
              <HThumb />
              <Tri $dir="r" $ml={749} />
            </HScroll>
            <Corner />
          </StatusBar>
          <Panel>
            <PanelHead>
              <PanelTab $w={93}>Mesas de trabajo</PanelTab>
              <PanelTab $w={41} $active>Capas</PanelTab>
              <PanelHeadIcons>
                <svg width="10" height="8"><path d="M0 0l4 4-4 4zM5 0l4 4-4 4z" fill="#ddd" /></svg>
                <svg width="1" height="10"><rect width="1" height="10" fill="#777" /></svg>
                <MenuLines />
              </PanelHeadIcons>
            </PanelHead>
            <LayerList>
              <LayerRow $sel>
                <LayerCell $w={21}><svg width="14" height="10" viewBox="0 0 14 10" fill="none"><path d="M1 5c3-5 9-5 12 0-3 5-9 5-12 0z" fill="#bbb" /><circle cx="7" cy="5" r="2.500" fill="#555" /></svg></LayerCell>
                <LayerCell $w={21} />
                <ColorTag $c="#4dfc4d" />
                <Slot $ml={4} $w={8}><Tri $dir="r" /></Slot>
                <Thumb><svg width="16" height="16" viewBox="0 0 16 16" fill="none"><circle cx="8" cy="8" r="7" stroke="#bbb" /><circle cx="8" cy="8" r="4.800" stroke="#ccc" /></svg></Thumb>
                <LayerName>forma</LayerName>
                <TargetRing /><SelSquare />
              </LayerRow>
              <LayerRow>
                <LayerCell $w={21} />
                <LayerCell $w={21}><svg width="9" height="11" viewBox="0 0 9 11" fill="none"><path d="M2 5V3a2.500 2.500 0 015 0v2" stroke="#aaa" /><rect y="5" width="9" height="6" fill="#aaa" /></svg></LayerCell>
                <ColorTag $c="#fa4d4d" />
                <Slot $ml={4} $w={8}><Tri $dir="r" /></Slot>
                <Thumb><svg width="16" height="17" viewBox="0 0 16 17"><path d="M3 6c0-4 10-4 10 0v1H3z" fill="#000" /><path d="M3 7h4v2H3zM9 7h4v2H9zM7 7.500h2v1H7z" fill="#000" /><path d="M4 11c2 2 6 2 8 0l-1 3-3 1-3-1zM2 17l4-2 2 1 2-1 4 2z" fill="#333" /></svg></Thumb>
                <LayerName>logo</LayerName>
                <TargetRing />
              </LayerRow>
            </LayerList>
            <PanelFooter>
              <FooterText>2 capas</FooterText>
              <Slot $ml={0} $w={13}><svg width="13" height="13" viewBox="0 0 13 13" fill="none"><circle cx="8" cy="5" r="4" stroke="#bbb" /><path d="M5 8L1 12" stroke="#bbb" strokeWidth="1.300" /></svg></Slot>
              <Slot $ml={13} $w={12}><svg width="12" height="12" viewBox="0 0 12 12" fill="none"><rect x=".5" y=".5" width="7" height="7" stroke="#ccc" /><rect x="4" y="4" width="7.500" height="7.500" fill="#777" /></svg></Slot>
              <Slot $ml={13} $w={15}><svg width="15" height="9" viewBox="0 0 15 9"><path d="M5 0h10v9H8L5 6z" fill="#bbb" /><path d="M0 0v3h4M2 1l2 2-2 2" stroke="#ddd" fill="none" /></svg></Slot>
              <Slot $ml={13} $w={11}><svg width="11" height="10" viewBox="0 0 11 10"><path d="M0 0h11v10H4V6H0z" fill="#bbb" /></svg></Slot>
              <Slot $ml={14} $w={11}><svg width="11" height="11" viewBox="0 0 11 11" fill="none"><path d="M0 2h11M4 2V0h3v2" stroke="#bbb" /><path d="M1.500 3h8v8h-8z" fill="#aaa" /><path d="M4 4v6M7 4v6" stroke="#4a4a4a" /></svg></Slot>
              <ResizeGrip />
            </PanelFooter>
            <PanelBottom><Grip $w={20} $h={3} /></PanelBottom>
          </Panel>
        </Center>
        <Docks>
          <DockCol>
            <DockHead $pl={25}>◂◂</DockHead>
            <DockGroup $h={70}>
              <GripRow $h={10}><Grip $w={20} $h={3} /></GripRow>
              <DockIcon $h={25}>{dockIcons.artboards}</DockIcon>
              <DockIcon $h={24} $mt={4} $active>{dockIcons.layers}</DockIcon>
            </DockGroup>
            <DockGroup $h={96}>
              <GripRow $h={9}><Grip $w={20} $h={3} /></GripRow>
              <DockIcon $h={26}>{dockIcons.palette}</DockIcon>
              <DockIcon $h={28}>{dockIcons.grad}</DockIcon>
              <DockIcon $h={30}>{dockIcons.transp}</DockIcon>
            </DockGroup>
          </DockCol>
          <DockCol>
            <DockHead $pl={24}>◂</DockHead>
            <DockGroup $h={98}>
              <GripRow $h={10}><Grip $w={20} $h={3} /></GripRow>
              <DockIcon $h={25}>{dockIcons.transform}</DockIcon>
              <DockIcon $h={30}>{dockIcons.align}</DockIcon>
              <DockIcon $h={28}>{dockIcons.pathf}</DockIcon>
            </DockGroup>
            <DockGroup $h={40}>
              <GripRow $h={9}><Grip $w={20} $h={3} /></GripRow>
              <DockIcon $h={26}>{dockIcons.brushes}</DockIcon>
            </DockGroup>
            <DockGroup $h={69}>
              <GripRow><Grip $w={20} $h={3} /></GripRow>
              <DockIcon $h={20}>{dockIcons.lines}</DockIcon>
              <DockIcon $h={36}>{dockIcons.appear}</DockIcon>
            </DockGroup>
            <DockGroup $h={41}>
              <GripRow $h={10}><Grip $w={20} $h={3} /></GripRow>
              <DockIcon $h={26}>{dockIcons.sym}</DockIcon>
            </DockGroup>
          </DockCol>
        </Docks>
      </Body>
      <Taskbar>
        <Orb><svg width="20" height="18" viewBox="0 0 20 18"><path d="M1 3c3-2 5-2 8 0l-1 6c-3-2-5-2-8 0z" fill="#e0552b" /><path d="M10 3c3 2 5 2 9 0l-1 6c-3 2-6 2-9 0z" fill="#7fba2a" /><path d="M0 10c3-2 5-2 8 0l-1 6c-3-2-5-2-8 0z" fill="#2f9fd8" /><path d="M9 10c3 2 5 2 9 0l-1 6c-3 2-6 2-9 0z" fill="#f5c22b" /></svg></Orb>
        <Slot $ml={28} $w={30} $h={36}><svg width="30" height="34" viewBox="0 0 30 34" fill="none"><path d="M6 20h19c1-8-3-13-9-13S4 13 5 21c1 7 6 10 11 10 4 0 8-2 9-6h-6c-1 2-2 3-4 3-3 0-5-3-5-8zM10 16c0-3 3-5 5-5 3 0 5 2 5 5z" fill="#34b5e8" /><path d="M27 3C22 0 10 10 5 22 3 28 4 32 8 32c-4-2-2-9 3-16C16 9 24 3 27 3c2 2 1 6-1 9 3-4 3-8 1-9z" fill="#f0c030" /></svg></Slot>
        <TaskTile $ml={18}><svg width="32" height="32" viewBox="0 0 32 32"><path d="M2 5h11l2 3h15v10H2z" fill="#e8c868" /><path d="M2 10h28l-2 20H4z" fill="#fbe9a8" /><path d="M6 3h4v4H6z" fill="#3cae3c" /><path d="M14 5h4v3h-4z" fill="#d84040" /><path d="M22 7h4v3h-4z" fill="#3a8ee0" /><path d="M8 20h16v4h2v6h-5v-5H11v5H6v-6h2z" fill="#5fa8d8" /></svg></TaskTile>
        <TaskTile $ml={4}><svg width="30" height="30" viewBox="0 0 30 30"><rect x="5" y="3" width="22" height="25" fill="#7eb6d8" /><rect x="3" y="4" width="20" height="24" fill="#4e8fb8" /><circle cx="13" cy="16" r="9" fill="#ea7c1e" /><path d="M10 10l8 6-8 6z" fill="#fff" /></svg></TaskTile>
        <Slot $ml={17} $w={32} $h={34}><svg width="32" height="34" viewBox="0 0 32 34"><circle cx="16" cy="19" r="14" fill="#f0522a" /><path d="M20 1c3 4 10 8 10 18 0 4-2 7-4 9 3-8-4-14-8-16-4-3-1-8 2-11z" fill="#fbb03b" /><path d="M4 10c0-3 1-5 3-6 0 3 1 4 3 5-3 2-5 4-4 8-2-2-2-5-2-7z" fill="#ff7a2a" /><circle cx="16" cy="19" r="7" fill="#5b2a9c" /><path d="M9 15c4-3 9-3 11 0-3-1-7 0-7 2-2 0-3-1-4-2z" fill="#f58a2a" /></svg></Slot>
        <Slot $ml={30} $w={32} $h={34}><svg width="32" height="34" viewBox="0 0 32 34"><rect width="32" height="34" fill="#3a3a3a" /><path d="M9 11l14-5v6L9 17zM9 16l14 5v0l0 1-14 5v-6l14-5z" fill="#ef9a1b" /></svg></Slot>
        <TaskTile $ml={17}><svg width="30" height="30" viewBox="0 0 30 30"><circle cx="15" cy="15" r="14" fill="#e14b36" /><path d="M15 15L3 8a14 14 0 0 0 7 20z" fill="#2fa84f" /><path d="M15 15l13-4a14 14 0 0 1-16 18z" fill="#f8c42b" /><circle cx="15" cy="15" r="7" fill="#fff" /><circle cx="15" cy="15" r="5.500" fill="#3f87ea" /></svg></TaskTile>
        <TaskTile $ml={4}><svg width="30" height="32" viewBox="0 0 30 32"><path d="M3 1h20l6 6v24H3z" fill="#fff" /><text x="1" y="23" fontFamily="Liberation Serif" fontWeight="700" fontSize="25" fill="#1c4fae">W</text></svg></TaskTile>
        <TaskTile $ml={4}><svg width="30" height="30" viewBox="0 0 30 30"><ellipse cx="12" cy="18" rx="11" ry="10" fill="#e6e6e6" /><circle cx="8" cy="14" r="2" fill="#3fa9e0" /><circle cx="14" cy="12" r="2" fill="#e8b42a" /><circle cx="7" cy="20" r="2" fill="#e04a3a" /><circle cx="13" cy="24" r="2" fill="#4cb050" /><path d="M27 2L15 24l3 1z" fill="#d98a2b" /></svg></TaskTile>
        <TaskTile $ml={4} $active><svg width="28" height="28" viewBox="0 0 28 28"><rect x="1" y="1" width="26" height="26" fill="#3d2a12" stroke="#e08a1e" strokeWidth="2" /><text x="14" y="20" textAnchor="middle" fontFamily="Liberation Sans" fontWeight="700" fontSize="17" fill="#f0a030">Ai</text></svg></TaskTile>
        <TrayText $ml={510}>EN</TrayText>
        <Slot $ml={16} $w={8}><svg width="8" height="5"><path d="M4 0l4 5H0z" fill="#fff" /></svg></Slot>
        <Slot $ml={14} $w={16}><svg width="15" height="18" viewBox="0 0 15 18"><path d="M1 0v18" stroke="#fff" /><path d="M2 1h5l2 2h4v5H8L6 6H2z" fill="#fff" /><circle cx="10" cy="13" r="4" fill="#d8252a" /><path d="M8 11l4 4m0-4l-4 4" stroke="#fff" /></svg></Slot>
        <Slot $ml={8} $w={15}><svg width="15" height="18" viewBox="0 0 15 18" fill="none"><rect x="1" y="4" width="7" height="12" stroke="#fff" /><path d="M6 5h8v6l-2 2H8l-2-2zM8 1v4M12 1v4" stroke="#fff" fill="#ddd" /></svg></Slot>
        <Slot $ml={9} $w={15}><svg width="15" height="13" viewBox="0 0 15 13"><rect x="0" y="11" width="2" height="2" fill="#fff" /><rect x="3" y="8" width="2" height="5" fill="#fff" /><rect x="6" y="6" width="2" height="7" fill="#999" /><rect x="9" y="3" width="2" height="10" fill="#555" /><rect x="12" y="0" width="2" height="13" fill="#555" /></svg></Slot>
        <Slot $ml={8} $w={15}><svg width="15" height="15" viewBox="0 0 15 15" fill="none"><path d="M1 5h3l4-4v13l-4-4H1z" fill="#eee" /><path d="M10 4c2 2 2 5 0 7M12 2c3 3 3 8 0 11" stroke="#ddd" /></svg></Slot>
        <Clock>05:27 p.m.<br />17/09/2020</Clock>
        <ShowDesktop />
      </Taskbar>
    </Screen>
  );
}
